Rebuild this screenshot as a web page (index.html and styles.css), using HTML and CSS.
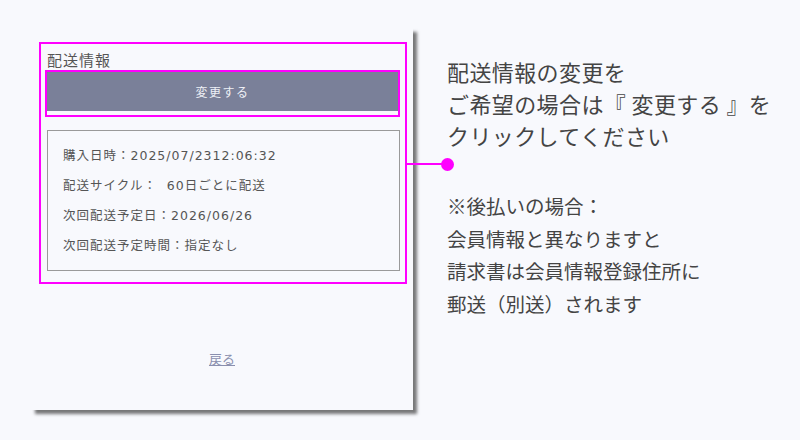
FILE: index.html
```html
<!DOCTYPE html>
<html lang="ja">
<head>
<meta charset="utf-8">
<title>配送情報</title>
<link rel="stylesheet" href="styles.css">
</head>
<body>
<div class="stage">
  <div class="phone">
    <section class="annot-outer">
      <h2 class="title">配送情報</h2>
      <div class="annot-inner">
        <button class="btn" type="button">変更する</button>
      </div>
      <div class="info">
        <p>購入日時：2025/07/2312:06:32</p>
        <p>配送サイクル：&nbsp;&nbsp;60日ごとに配送</p>
        <p>次回配送予定日：2026/06/26</p>
        <p>次回配送予定時間：指定なし</p>
      </div>
      <span class="connector"><span class="dot"></span></span>
    </section>
    <a class="back" href="#">戻る</a>
  </div>
  <div class="notes">
    <p class="lead">配送情報の変更を<br>ご希望の場合は『 変更する 』を<br>クリックしてください</p>
    <p class="sub">※後払いの場合：<br>会員情報と異なりますと<br>請求書は会員情報登録住所に<br>郵送（別送）されます</p>
  </div>
</div>
</body>
</html>
```
FILE: styles.css
```css
* { box-sizing: border-box; }
html, body { margin: 0; padding: 0; }
body {
  width: 800px;
  height: 440px;
  overflow: hidden;
  background: #f8f9fd;
  font-family: "Noto Sans CJK JP", "Noto Sans", sans-serif;
  color: #555;
}
.stage {
  display: flex;
  align-items: flex-start;
  padding: 28px 0 0 31px;
}
.phone {
  width: 382px;
  height: 382px;
  background: #f8f9fd;
  box-shadow: 4px 4px 3px rgba(50, 50, 50, 0.65);
  padding: 14px 0 0 8px;
  display: flex;
  flex-direction: column;
}
.annot-outer {
  position: relative;
  width: 368px;
  border: 2px solid #ff00ff;
  padding: 6px 5px 11px 4px;
}
.title {
  margin: 0 0 1px 2px;
  font-size: 15px;
  line-height: 19px;
  font-weight: normal;
  color: #555;
  letter-spacing: 1px;
}
.annot-inner {
  border: 2px solid #ff00ff;
  padding: 0 0 4px 0;
}
.btn {
  display: block;
  width: 100%;
  height: 39px;
  border: none;
  background: #7a8099;
  color: #eef0f6;
  font-family: inherit;
  font-size: 12px;
  letter-spacing: 1.5px;
  padding: 0;
}
.info {
  margin: 13px 0 0 2px;
  border: 1px solid #9a9a9a;
  padding: 10px 15px 9px;
}
.info p {
  margin: 0;
  font-family: "DejaVu Sans", "Noto Sans CJK JP", sans-serif;
  font-size: 12.5px;
  line-height: 30px;
  letter-spacing: 1px;
  color: #555;
}
.connector {
  position: absolute;
  left: calc(100% + 2px);
  top: 119px;
  width: 41px;
  height: 2px;
  background: #ff00ff;
}
.dot {
  position: absolute;
  right: -6px;
  top: -5px;
  width: 13px;
  height: 13px;
  border-radius: 50%;
  background: #ff00ff;
}
.back {
  align-self: center;
  margin: 66px 0 0 -8px;
  font-size: 13px;
  line-height: 18px;
  color: #8a8fae;
  text-decoration: underline;
}
.notes {
  margin: 27px 0 0 34px;
  color: #444;
}
.lead {
  margin: 0;
  font-size: 22px;
  line-height: 32px;
  letter-spacing: 0.4px;
}
.sub {
  margin: 39px 0 0 0;
  font-size: 19.5px;
  line-height: 32.5px;
}
```
